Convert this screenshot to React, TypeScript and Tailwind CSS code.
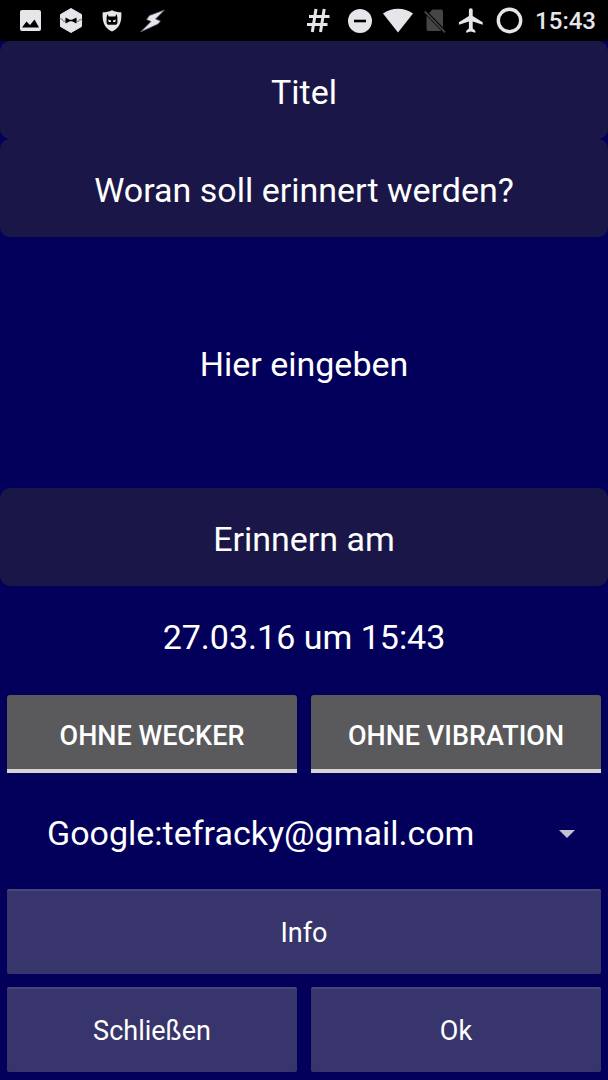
import React, { useState } from 'react';

const APP_FONT = "font-[Roboto,'Noto_Sans',sans-serif]";

const ImageIcon = () => (
  <svg viewBox="0 0 28 28" className="w-7 h-7" aria-hidden="true">
    <rect x="4" y="3" width="21" height="21" rx="2" fill="#e6e6ea" />
    <path d="M6 20.500L10.500 14.500L14 18L18.500 12.500L23 20.500Z" fill="#000" />
  </svg>
);

const HexagonIcon = () => (
  <svg viewBox="0 0 28 28" className="w-7 h-7" aria-hidden="true">
    <path d="M14 1.500L24.500 7.500V19.500L14 25.500L3.500 19.500V7.500Z" fill="#e6e6ea" strokeLinejoin="round" stroke="#e6e6ea" />
    <path d="M2.500 11.500L5 12L7 15L9.500 12L11 13.500H17L18.500 12L21 15L23 12L25.500 14" fill="none" stroke="#77778c" strokeWidth="1" />
    <path d="M8.500 10.500L13 12.700H15L19.500 10.500V16.500L15 14.300H13L8.500 16.500Z" fill="#000" />
  </svg>
);

const ShieldIcon = () => (
  <svg viewBox="0 0 28 28" className="w-7 h-7" aria-hidden="true">
    <path d="M14 3.300C17 4.900 20 5.300 23.300 5.300C23.800 13.500 22.500 20.800 14 24.500C5.500 20.800 4.200 13.500 4.700 5.300C8 5.300 11 4.900 14 3.300Z" fill="#e6e6ea" />
    <path d="M9.300 7L10.800 9.500H17.200L18.700 7L19.400 10.500V15.500C19.400 17 18.500 17.800 17 17.800H11C9.500 17.800 8.600 17 8.600 15.500V10.500Z" fill="#000" />
    <path d="M10 12.600L13 13.400V15H10.800ZM18 12.600L15 13.400V15H17.200Z" fill="#e6e6ea" />
  </svg>
);

const BoltIcon = () => (
  <svg viewBox="0 0 28 28" className="w-7 h-7" aria-hidden="true">
    <path d="M25.500 3L10.500 8.500L7.500 12.500L12 14.500L1.500 25L19 17L21.500 14L16.500 12Z" fill="#e6e6ea" stroke="#55557c" strokeWidth=".7" />
  </svg>
);

const HashIcon = () => (
  <svg viewBox="0 0 34 28" className="w-[34px] h-7" aria-hidden="true">
    <path d="M8 9.500H28.500M6 17.500H26.500M15 2L11.300 25M23.200 2L19.500 25" fill="none" stroke="#e6e6ea" strokeWidth="3" />
  </svg>
);

const DoNotDisturbIcon = () => (
  <svg viewBox="0 0 26 28" className="w-[26px] h-7" aria-hidden="true">
    <circle cx="14" cy="14" r="12" fill="#e6e6ea" />
    <path d="M8 14H20" stroke="#000" strokeWidth="2.600" />
  </svg>
);

const WifiIcon = () => (
  <svg viewBox="0 0 30 28" className="w-[30px] h-7" aria-hidden="true">
    <path d="M15 25.500L0 6.500C8.500 .2 21.500 .2 30 6.500Z" fill="#e6e6ea" />
  </svg>
);

const NoSimIcon = () => (
  <svg viewBox="0 0 22 28" className="w-[22px] h-7" aria-hidden="true">
    <path d="M8.500 2.500H17Q19 2.500 19 4.500V20.500L5 6Z" fill="#454545" />
    <path d="M2.500 8.500L17.500 24H4.500Q2.500 24 2.500 22Z" fill="#454545" />
    <path d="M.8 4.500L21 25.300" stroke="#454545" strokeWidth="1.800" />
  </svg>
);

const PlaneIcon = () => (
  <svg viewBox="0 0 28 28" className="w-7 h-7" aria-hidden="true">
    <path d="M25.700 17.700V15.300L15.700 9V3.100A1.900 1.900 0 0 0 11.900 3.100V9L1.900 15.300V17.700L11.900 14.600V21.500L9.200 23.700V25.700L13.800 24.500L18.400 25.700V23.700L15.700 21.500V14.600Z" fill="#e6e6ea" />
  </svg>
);

const RingIcon = () => (
  <svg viewBox="0 0 28 28" className="w-7 h-7" aria-hidden="true">
    <circle cx="13.500" cy="13.500" r="11.200" fill="none" stroke="#e6e6ea" strokeWidth="3.400" />
  </svg>
);

const StatusBar: React.FC = () => (
  <header className="flex h-[41px] items-center justify-between bg-black pl-4 pr-3">
    <div className="flex items-center gap-[13px]">
      <ImageIcon />
      <HexagonIcon />
      <ShieldIcon />
      <BoltIcon />
    </div>
    <div className="flex items-center gap-[11px]">
      <HashIcon />
      <DoNotDisturbIcon />
      <WifiIcon />
      <NoSimIcon />
      <PlaneIcon />
      <RingIcon />
      <time className="text-2xl font-medium text-[#e6e6ea]">15:43</time>
    </div>
  </header>
);

const BAR = 'flex h-[98px] items-center justify-center rounded-[10px] bg-[#1a1748] pt-1 text-[34px]';

interface ToggleProps {
  on: boolean;
  onLabel: string;
  offLabel: string;
  onToggle: () => void;
}

const Toggle: React.FC<ToggleProps> = ({ on, onLabel, offLabel, onToggle }) => (
  <button
    type="button"
    aria-pressed={on}
    onClick={onToggle}
    className="h-[78px] rounded-t-[3px] border-b-4 border-[#d6d3d8] bg-[#5a5a5c] pt-2 text-[27px] font-medium uppercase"
  >
    {on ? onLabel : offLabel}
  </button>
);

interface ActionButtonProps {
  children: React.ReactNode;
  className?: string;
}

const ActionButton: React.FC<ActionButtonProps> = ({ children, className = '' }) => (
  <button
    type="button"
    className={`h-[85px] rounded-[2px] border-t-2 border-[#47457a] bg-[#37356b] pt-0.5 text-[27px] ${className}`}
  >
    {children}
  </button>
);

const App: React.FC = () => {
  const [text, setText] = useState<string>('');
  const [alarm, setAlarm] = useState<boolean>(false);
  const [vibration, setVibration] = useState<boolean>(false);

  return (
    <div className={`flex min-h-screen flex-col bg-[#02005a] text-white ${APP_FONT}`}>
      <StatusBar />
      <main className="flex flex-1 flex-col">
        <h1 className={BAR}>Titel</h1>
        <label htmlFor="reminder" className={BAR}>Woran soll erinnert werden?</label>
        <div className="flex flex-1 items-center pt-1">
          <textarea
            id="reminder"
            rows={1}
            value={text}
            onChange={e => setText(e.target.value)}
            placeholder="Hier eingeben"
            className="field-sizing-content w-full resize-none text-center text-[34px] outline-none placeholder:text-white"
          />
        </div>
        <h2 id="due" className={BAR}>Erinnern am</h2>
        <button type="button" aria-describedby="due" className="h-[102px] text-[34px]">
          27.03.16 um 15:43
        </button>

        <div className="grid grid-cols-2 gap-3.5 p-[7px]">
          <Toggle on={alarm} onLabel="Mit Wecker" offLabel="Ohne Wecker" onToggle={() => setAlarm(!alarm)} />
          <Toggle on={vibration} onLabel="Mit Vibration" offLabel="Ohne Vibration" onToggle={() => setVibration(!vibration)} />
        </div>

        <div className="relative flex h-[109px] items-center pb-0.5">
          <select aria-label="Kalender" className="h-full w-full appearance-none pl-[47px] pr-20 text-[34px] outline-none">
            <option>Google:tefracky@gmail.com</option>
          </select>
          <svg viewBox="0 0 18 10" className="pointer-events-none absolute right-8 w-[18px]" aria-hidden="true">
            <path d="M1 1H17L9 9Z" fill="#c3c2d2" />
          </svg>
        </div>

        <div className="grid grid-cols-2 gap-x-3.5 gap-y-[13px] px-[7px] pb-2">
          <ActionButton className="col-span-2">Info</ActionButton>
          <ActionButton>Schließen</ActionButton>
          <ActionButton>Ok</ActionButton>
        </div>
      </main>
    </div>
  );
};

export default App;
